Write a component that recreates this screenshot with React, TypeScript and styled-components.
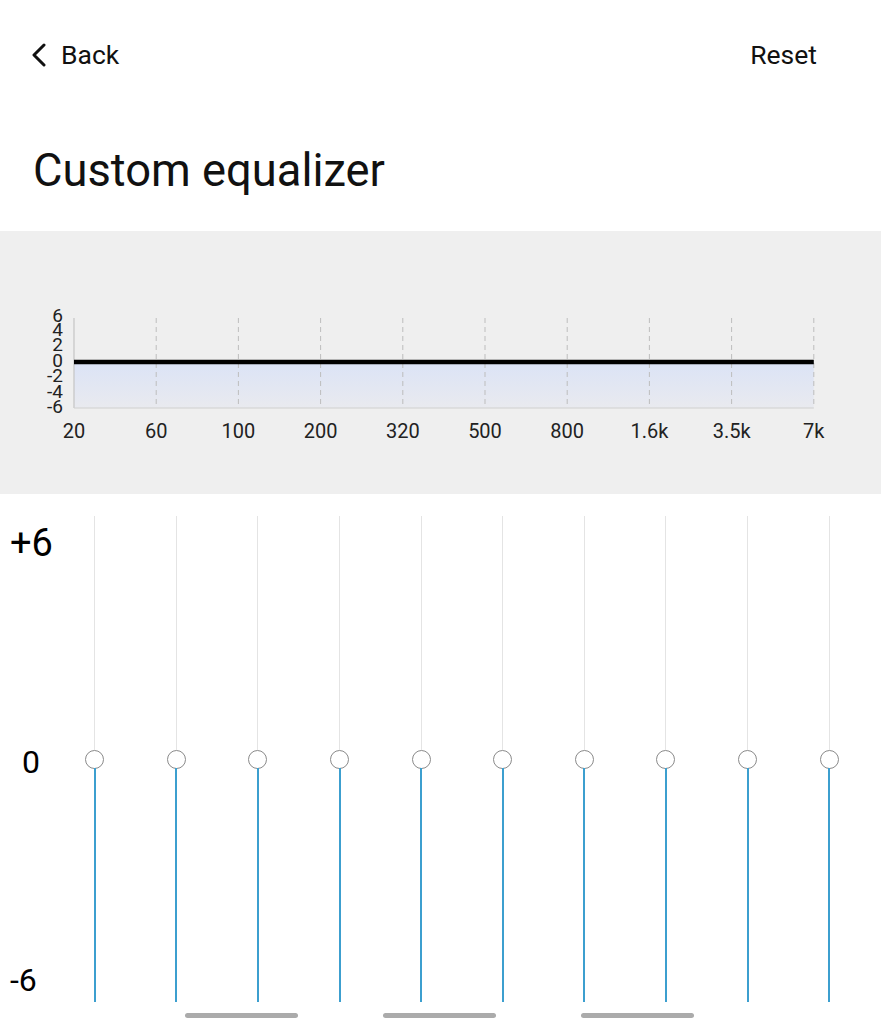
import styled, { createGlobalStyle } from 'styled-components';

const GlobalStyle = createGlobalStyle`
  body {
    margin: 0;
    background: #ffffff;
    font-family: Roboto, 'Noto Sans', sans-serif;
    color: #111111;
  }
`;

const BANDS = ['20', '60', '100', '200', '320', '500', '800', '1.6k', '3.5k', '7k'];
const Y_TICKS = [
  { label: '6', y: 22 },
  { label: '4', y: 36 },
  { label: '2', y: 51 },
  { label: '0', y: 67 },
  { label: '-2', y: 82 },
  { label: '-4', y: 98 },
  { label: '-6', y: 113 },
];

// chart geometry (svg coords)
const X0 = 34;
const STEP = 82.2;
const TOP = 18;
const MID = 62;
const BOTTOM = 108;

function ResponseChart() {
  const xEnd = X0 + STEP * 9;
  return (
    <ChartSvg width={800} height={150} viewBox='0 0 800 150'>
      <defs>
        <linearGradient id='fillGrad' x1='0' y1='0' x2='0' y2='1'>
          <stop offset='0' stopColor='#dbe3f6' />
          <stop offset='1' stopColor='#e9eaef' />
        </linearGradient>
      </defs>
      <rect x={X0} y={MID} width={xEnd - X0} height={BOTTOM - MID} fill='url(#fillGrad)' />
      {BANDS.map((_, i) =>
        i === 0 ? null : (
          <line
            key={i}
            x1={X0 + STEP * i}
            x2={X0 + STEP * i}
            y1={TOP}
            y2={BOTTOM}
            stroke='#bdbdbd'
            strokeWidth={1}
            strokeDasharray='5 4'
          />
        )
      )}
      <line x1={X0} x2={X0} y1={TOP} y2={BOTTOM} stroke='#c4c4c4' strokeWidth={1.2} />
      <line x1={X0} x2={xEnd} y1={BOTTOM} y2={BOTTOM} stroke='#cfcfcf' strokeWidth={1.2} />
      <line x1={X0} x2={xEnd} y1={MID} y2={MID} stroke='#000000' strokeWidth={4.5} />
      {Y_TICKS.map((t) => (
        <text key={t.label} x={23} y={t.y} textAnchor='end' fontSize={19} fill='#222'>
          {t.label}
        </text>
      ))}
      {BANDS.map((b, i) => (
        <text key={b} x={X0 + STEP * i} y={138} textAnchor='middle' fontSize={20} fill='#222'>
          {b}
        </text>
      ))}
    </ChartSvg>
  );
}

function Slider({ value }: { value: number }) {
  // value in dB, -6..6
  const span = 234 * 2;
  const up = Math.round(((6 - value) / 12) * span);
  return (
    <SliderCol>
      <TrackUp style={{ height: up }} />
      <Thumb />
      <TrackDown style={{ height: span - up }} />
    </SliderCol>
  );
}

export default function App() {
  return (
    <Page>
      <GlobalStyle />
      <Header>
        <BackButton>
          <svg width='18' height='24' viewBox='0 0 18 24'>
            <path d='M14 2 L4 12 L14 22' fill='none' stroke='#111' strokeWidth='3' strokeLinecap='round' strokeLinejoin='round' />
          </svg>
          <HeaderText>Back</HeaderText>
        </BackButton>
        <HeaderText>Reset</HeaderText>
      </Header>

      <TitleBlock>
        <Title>Custom equalizer</Title>
      </TitleBlock>

      <ChartPanel>
        <ResponseChart />
      </ChartPanel>

      <SliderArea>
        <LabelCol>
          <ScaleLabel size={38} top={8} left={10}>+6</ScaleLabel>
          <ScaleLabel size={32} top={184} left={22}>0</ScaleLabel>
          <ScaleLabel size={32} top={186} left={10}>-6</ScaleLabel>
        </LabelCol>
        {BANDS.map((b) => (
          <Slider key={b} value={0} />
        ))}
      </SliderArea>

      <PagerRow>
        <PagerBar />
        <PagerBar />
        <PagerBar />
      </PagerRow>
    </Page>
  );
}

const Page = styled.div`
  width: 881px;
  height: 1024px;
  overflow: hidden;
  background: #ffffff;
`;

const Header = styled.div`
  height: 110px;
  display: flex;
  align-items: center;
  justify-content: space-between;
  padding: 0 64px 0 30px;
  box-sizing: border-box;
`;

const BackButton = styled.div`
  display: flex;
  align-items: center;
  gap: 13px;
`;

const HeaderText = styled.span`
  font-size: 26.5px;
  line-height: 1;
  color: #111111;
`;

const TitleBlock = styled.div`
  height: 121px;
  display: flex;
  align-items: center;
  padding-left: 33px;
  box-sizing: border-box;
`;

const Title = styled.h1`
  margin: 0;
  font-size: 45.3px;
  font-weight: 400;
  line-height: 1;
  color: #111111;
`;

const ChartPanel = styled.div`
  height: 263px;
  background: #efefef;
  padding: 69px 0 0 40px;
  box-sizing: border-box;
`;

const ChartSvg = styled.svg`
  display: block;
  font-family: Roboto, sans-serif;
`;

const SliderArea = styled.div`
  display: flex;
  padding-top: 22px;
  height: 508px;
  box-sizing: border-box;
`;

const LabelCol = styled.div`
  width: 54px;
  display: flex;
  flex-direction: column;
  align-items: flex-start;
`;

const ScaleLabel = styled.span<{ size: number; top: number; left: number }>`
  font-size: ${(p) => p.size}px;
  line-height: 1;
  margin-top: ${(p) => p.top}px;
  margin-left: ${(p) => p.left}px;
  color: #000000;
`;

const SliderCol = styled.div`
  width: 81.6px;
  display: flex;
  flex-direction: column;
  align-items: center;
`;

const TrackUp = styled.div`
  width: 1px;
  background: #e4e4e4;
`;

const TrackDown = styled.div`
  width: 2px;
  background: #3c9fcf;
`;

const Thumb = styled.div`
  width: 19px;
  height: 19px;
  margin: -0.5px 0;
  border: 1.3px solid #8a8a8a;
  border-radius: 50%;
  background: #ffffff;
  box-sizing: border-box;
`;

const PagerRow = styled.div`
  display: flex;
  justify-content: center;
  gap: 85px;
  margin-top: 11px;
  padding-right: 2px;
`;

const PagerBar = styled.div`
  width: 113px;
  height: 5px;
  border-radius: 3px;
  background: #ababab;
`;
